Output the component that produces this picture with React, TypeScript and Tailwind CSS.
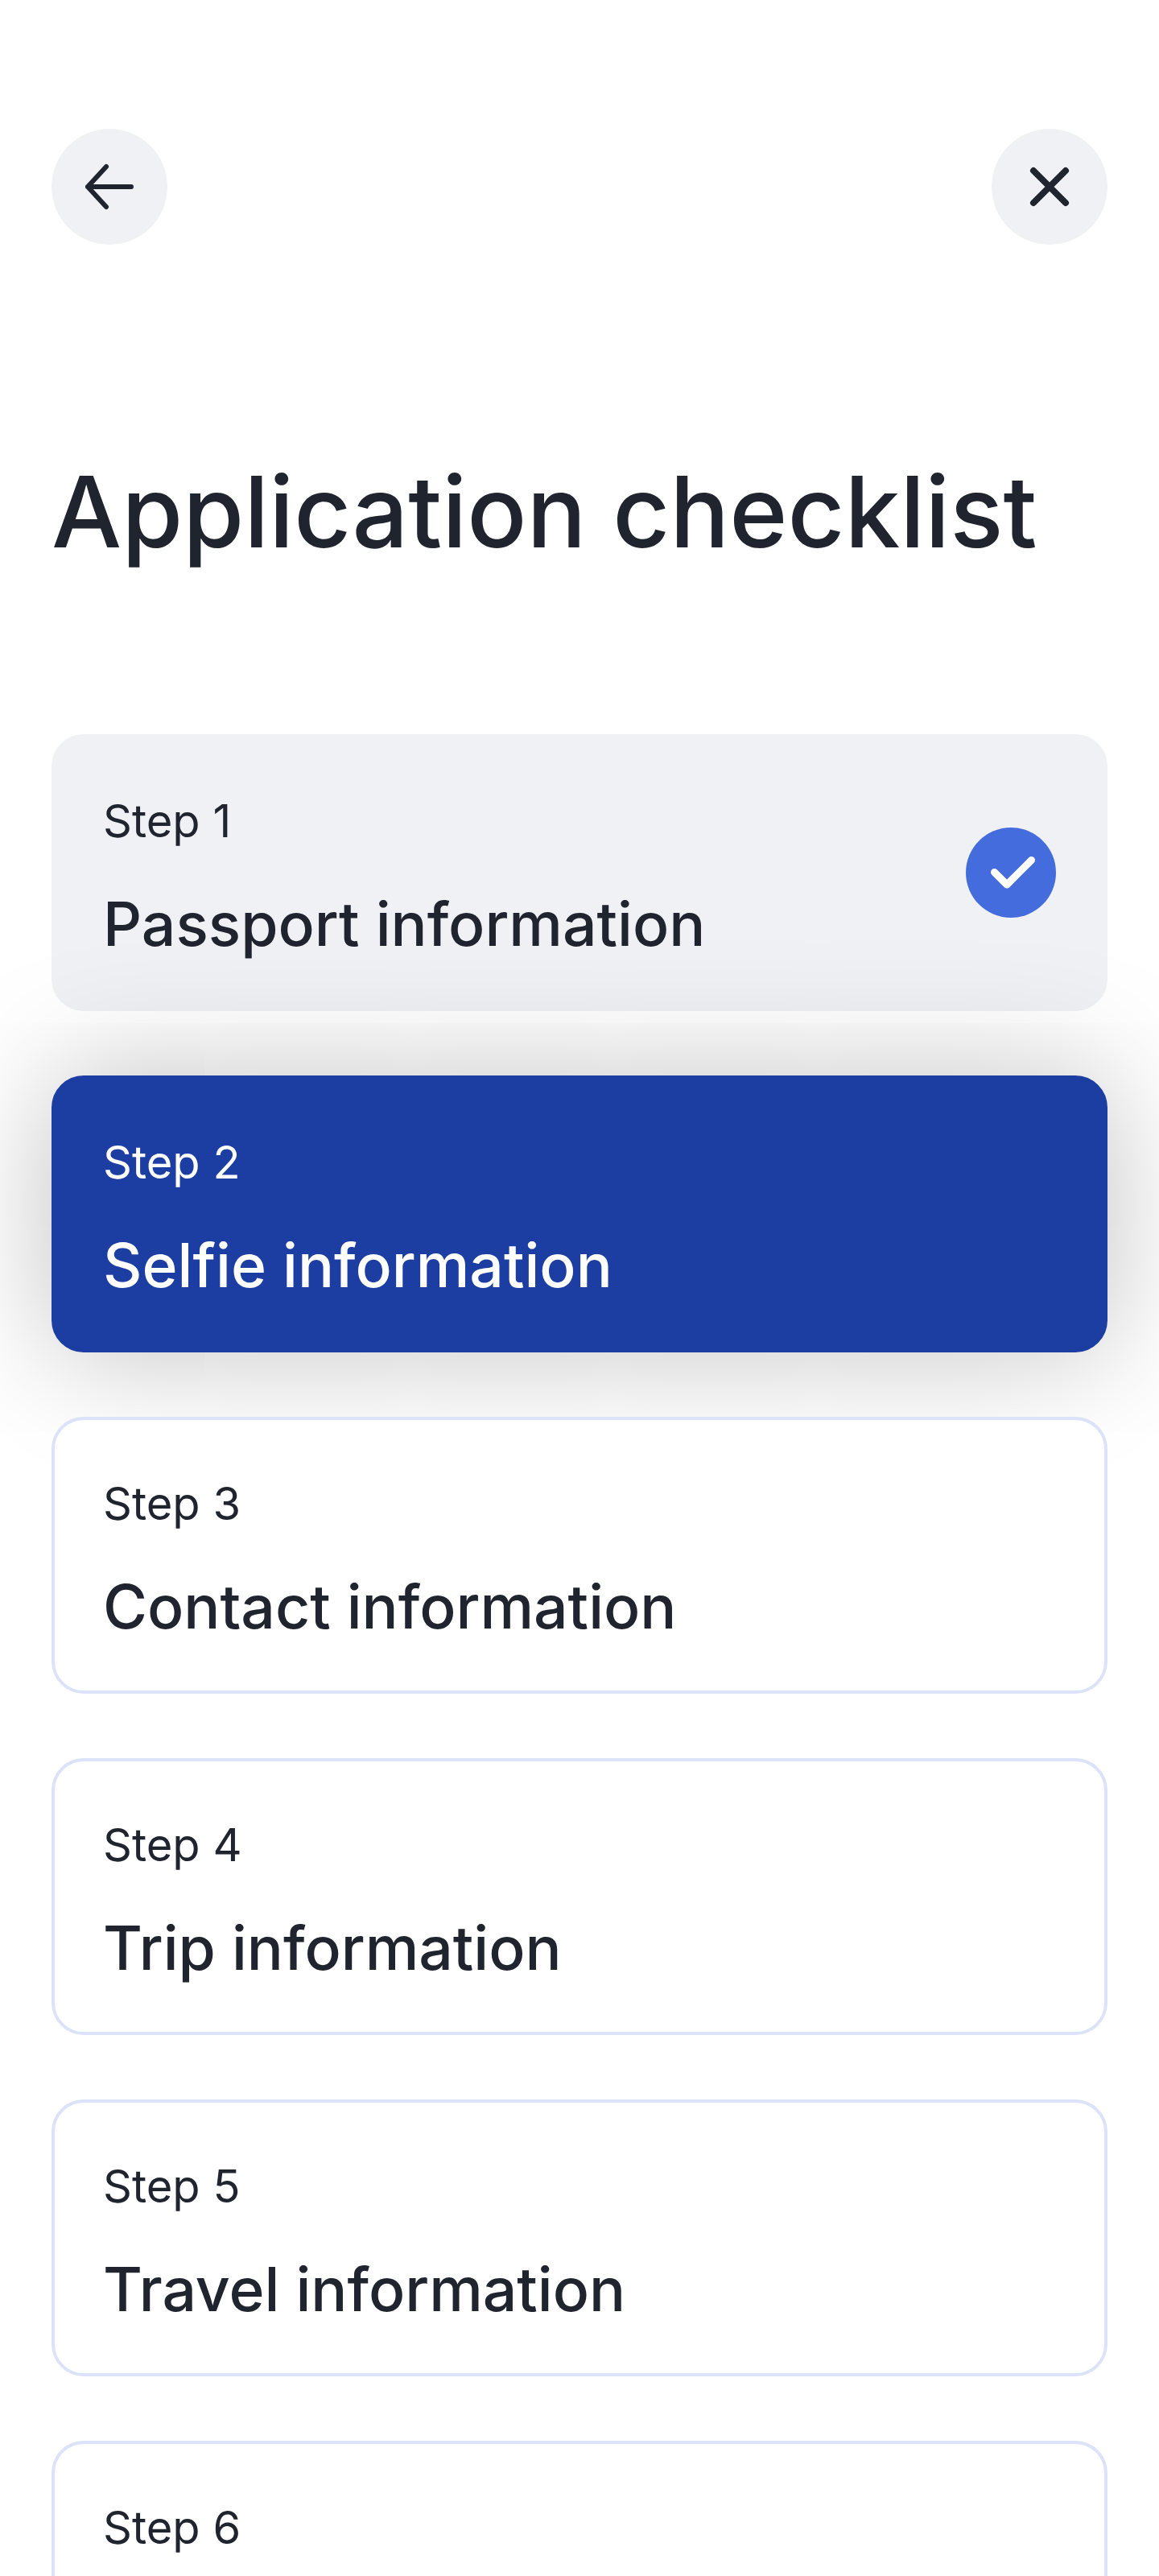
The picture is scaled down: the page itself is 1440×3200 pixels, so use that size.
import React from 'react';
import clsx from 'clsx';

type StepStatus = 'done' | 'active' | 'upcoming';

interface Step {
  id: number;
  title?: string;
  status: StepStatus;
}

const steps: Step[] = [
  { id: 1, title: 'Passport information', status: 'done' },
  { id: 2, title: 'Selfie information', status: 'active' },
  { id: 3, title: 'Contact information', status: 'upcoming' },
  { id: 4, title: 'Trip information', status: 'upcoming' },
  { id: 5, title: 'Travel information', status: 'upcoming' },
  { id: 6, status: 'upcoming' },
];

const cardStyles: Record<StepStatus, string> = {
  done: 'border-[#f0f1f5] bg-[#f0f1f5]',
  active: 'border-[#1c3da1] bg-[#1c3da1] text-white shadow-[0_0_160px_rgba(0,0,0,0.25)]',
  upcoming: 'border-[#dce3f9] bg-white',
};

const BackIcon = () => (
  <svg viewBox="0 0 144 144" className="size-full" fill="none" stroke="currentColor" strokeWidth="6" strokeLinecap="round" strokeLinejoin="round">
    <path d="M99 72H45M68 47L45 72L68 97" />
  </svg>
);

const CloseIcon = () => (
  <svg viewBox="0 0 144 144" className="size-full" fill="none" stroke="currentColor" strokeWidth="8" strokeLinecap="round">
    <path d="M52 52L92 92M92 52L52 92" />
  </svg>
);

const CheckIcon = () => (
  <svg viewBox="0 0 112 112" className="size-28 shrink-0" fill="none">
    <circle cx="56" cy="56" r="56" fill="#456cdc" />
    <path d="M35.5 55.5L51 71L81.5 40.5" stroke="white" strokeWidth="9" strokeLinecap="round" strokeLinejoin="round" />
  </svg>
);

const RoundButton: React.FC<{ label: string; children: React.ReactNode }> = ({ label, children }) => (
  <button type="button" aria-label={label} className="size-36 rounded-full bg-[#f0f1f5]">
    {children}
  </button>
);

const StepCard: React.FC<{ step: Step }> = ({ step }) => (
  <button
    type="button"
    className={clsx(
      'flex min-h-[344px] w-full items-center justify-between rounded-[40px] border-4 px-[60px] text-left',
      cardStyles[step.status]
    )}
  >
    <span className="flex flex-col gap-8 self-start pt-16">
      <span className="text-[56px] leading-[80px]">Step {step.id}</span>
      {step.title && <span className="text-[75px] leading-[112px] font-medium">{step.title}</span>}
    </span>
    {step.status === 'done' && <CheckIcon />}
  </button>
);

const App: React.FC = () => {
  return (
    <main className="h-screen overflow-hidden bg-white px-16 pt-40 font-['Inter',sans-serif] text-[#20242f]">
      <header className="flex items-center justify-between">
        <RoundButton label="Back">
          <BackIcon />
        </RoundButton>
        <RoundButton label="Close">
          <CloseIcon />
        </RoundButton>
      </header>
      <h1 className="mt-64 text-[123px] leading-[152px] font-medium">Application checklist</h1>
      <ol className="mt-50 flex flex-col gap-20">
        {steps.map((step) => (
          <li key={step.id}>
            <StepCard step={step} />
          </li>
        ))}
      </ol>
    </main>
  );
};

export default App;
